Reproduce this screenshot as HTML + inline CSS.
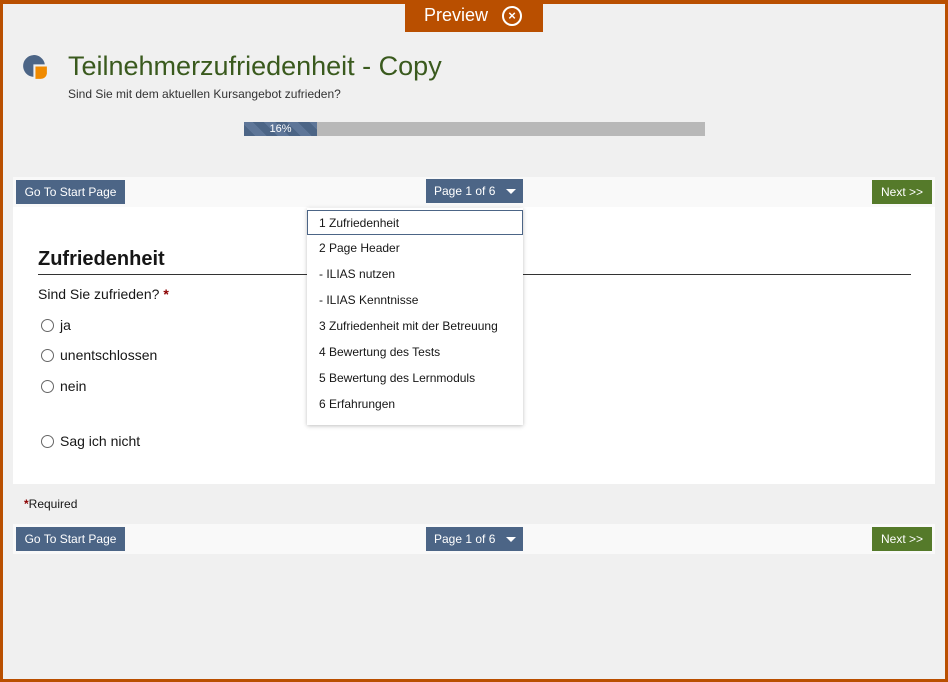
<!DOCTYPE html>
<html><head><meta charset="utf-8"><style>
*{box-sizing:border-box;margin:0;padding:0}
body{width:948px;height:682px;overflow:hidden;background:#f0f0f0;font-family:"Liberation Sans",sans-serif;color:#161616;position:relative}
.frame{position:absolute;inset:0;border:3px solid #b94f00;border-top-width:4px}
.abs{position:absolute}
.tab{left:405px;top:0;width:138px;height:32px;background:#b94f00;color:#fff;font-size:18px;line-height:31px;padding-left:19px}
.tab .x{position:absolute;left:97px;top:6px;width:20px;height:20px;border:2px solid #fff;border-radius:50%;font-size:13px;line-height:16px;text-align:center;font-weight:bold}
.btn{position:absolute;height:24px;background:#4c6586;color:#fff;font-size:12px;line-height:24px;text-align:center}
.next{background:#557a2a}
.nav{position:absolute;left:13px;width:922px;height:30px;background:#f9f9f9}
.radio{position:absolute;left:41px;width:13px;height:13px;border:1px solid #666;border-radius:50%;background:#fff}
.opt{position:absolute;left:60px;font-size:14px}
.dd{left:307px;top:208px;width:216px;height:217px;background:#fff;box-shadow:0 1px 4px rgba(0,0,0,.25)}
.dd div{height:26px;line-height:26px;padding-left:12px;font-size:12px;color:#161616}
.dd .sel{border:1px solid #4c6586;line-height:24px;margin-top:2px;height:25px;padding-left:11px}
</style></head><body>
<div class="abs tab">Preview<span class="x">×</span></div>
<svg class="abs" style="left:23px;top:54px" width="27" height="27" viewBox="0 0 26 26"><path d="M21 10 A10.5 10.5 0 1 0 10 22 L10 10 Z" fill="#4c6586"/><path d="M12 12 H23 V19 A6 6 0 0 1 17 24 H12 Z" fill="#f08a00"/></svg>
<div class="abs" style="left:68px;top:51px;font-size:27px;color:#3a5a1e">Teilnehmerzufriedenheit - Copy</div>
<div class="abs" style="left:68px;top:87px;font-size:12px;color:#333">Sind Sie mit dem aktuellen Kursangebot zufrieden?</div>
<div class="abs" style="left:244px;top:122px;width:461px;height:14px;background:#b8b8b8"></div>
<div class="abs" style="left:244px;top:122px;width:73px;height:14px;background:repeating-linear-gradient(45deg,#4c6586 0 8px,#5e7698 8px 16px);color:#fff;font-size:11px;line-height:14px;text-align:center">16%</div>
<div class="nav" style="top:177px"></div>
<div class="btn" style="left:16px;top:180px;width:109px">Go To Start Page</div>
<div class="btn" style="left:426px;top:179px;width:97px;text-align:left;padding-left:8px">Page 1 of 6 <span style="position:absolute;left:80px;top:10px;border:5px solid transparent;border-top-color:#fff;border-bottom:0"></span></div>
<div class="btn next" style="left:872px;top:180px;width:60px">Next &gt;&gt;</div>
<div class="abs" style="left:13px;top:207px;width:922px;height:277px;background:#fff"></div>
<div class="abs" style="left:38px;top:248px;font-size:20px;font-weight:bold">Zufriedenheit</div>
<div class="abs" style="left:38px;top:274px;width:873px;height:1px;background:#333"></div>
<div class="abs" style="left:38px;top:286px;font-size:14px">Sind Sie zufrieden? <span style="color:#8b0000;font-weight:bold">*</span></div>
<div class="radio" style="top:319px"></div><div class="opt" style="top:317px">ja</div>
<div class="radio" style="top:349px"></div><div class="opt" style="top:347px">unentschlossen</div>
<div class="radio" style="top:380px"></div><div class="opt" style="top:378px">nein</div>
<div class="radio" style="top:435px"></div><div class="opt" style="top:433px">Sag ich nicht</div>
<div class="abs" style="left:24px;top:497px;font-size:12px"><span style="color:#8b0000;font-weight:bold">*</span>Required</div>
<div class="nav" style="top:524px"></div>
<div class="btn" style="left:16px;top:527px;width:109px">Go To Start Page</div>
<div class="btn" style="left:426px;top:527px;width:97px;text-align:left;padding-left:8px">Page 1 of 6 <span style="position:absolute;left:80px;top:10px;border:5px solid transparent;border-top-color:#fff;border-bottom:0"></span></div>
<div class="btn next" style="left:872px;top:527px;width:60px">Next &gt;&gt;</div>
<div class="abs dd">
<div class="sel">1 Zufriedenheit</div><div>2 Page Header</div><div>- ILIAS nutzen</div><div>- ILIAS Kenntnisse</div><div>3 Zufriedenheit mit der Betreuung</div><div>4 Bewertung des Tests</div><div>5 Bewertung des Lernmoduls</div><div>6 Erfahrungen</div>
</div>
<div class="frame"></div>
</body></html>
